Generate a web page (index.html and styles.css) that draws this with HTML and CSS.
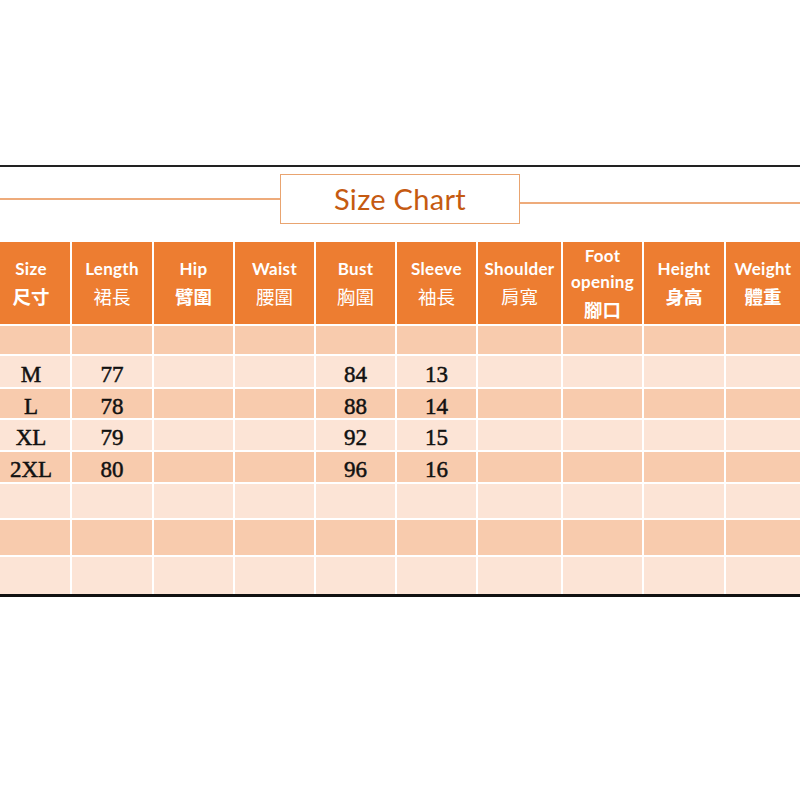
FILE: index.html
```html
<!DOCTYPE html>
<html>
<head>
<meta charset="utf-8">
<link rel="stylesheet" href="styles.css">
</head>
<body>
<div class="page">
  <div class="rule-top"></div>
  <div class="title-row">
    <div class="line line-left"></div>
    <div class="title-box">Size Chart</div>
    <div class="line line-right"></div>
  </div>
  <div class="chart">
    <div class="cell head first"><span class="en">Size</span><span class="zh b">尺寸</span></div>
    <div class="cell head"><span class="en">Length</span><span class="zh">裙長</span></div>
    <div class="cell head"><span class="en">Hip</span><span class="zh b">臂圍</span></div>
    <div class="cell head"><span class="en">Waist</span><span class="zh">腰圍</span></div>
    <div class="cell head"><span class="en">Bust</span><span class="zh">胸圍</span></div>
    <div class="cell head"><span class="en">Sleeve</span><span class="zh">袖長</span></div>
    <div class="cell head"><span class="en">Shoulder</span><span class="zh">肩寬</span></div>
    <div class="cell head"><span class="en">Foot</span><span class="en">opening</span><span class="zh b">腳口</span></div>
    <div class="cell head"><span class="en">Height</span><span class="zh b">身高</span></div>
    <div class="cell head"><span class="en">Weight</span><span class="zh b">體重</span></div>

    <div class="cell dark first"></div><div class="cell dark"></div><div class="cell dark"></div><div class="cell dark"></div><div class="cell dark"></div><div class="cell dark"></div><div class="cell dark"></div><div class="cell dark"></div><div class="cell dark"></div><div class="cell dark"></div>

    <div class="cell light first">M</div><div class="cell light">77</div><div class="cell light"></div><div class="cell light"></div><div class="cell light">84</div><div class="cell light">13</div><div class="cell light"></div><div class="cell light"></div><div class="cell light"></div><div class="cell light"></div>

    <div class="cell dark first">L</div><div class="cell dark">78</div><div class="cell dark"></div><div class="cell dark"></div><div class="cell dark">88</div><div class="cell dark">14</div><div class="cell dark"></div><div class="cell dark"></div><div class="cell dark"></div><div class="cell dark"></div>

    <div class="cell light first">XL</div><div class="cell light">79</div><div class="cell light"></div><div class="cell light"></div><div class="cell light">92</div><div class="cell light">15</div><div class="cell light"></div><div class="cell light"></div><div class="cell light"></div><div class="cell light"></div>

    <div class="cell dark first">2XL</div><div class="cell dark">80</div><div class="cell dark"></div><div class="cell dark"></div><div class="cell dark">96</div><div class="cell dark">16</div><div class="cell dark"></div><div class="cell dark"></div><div class="cell dark"></div><div class="cell dark"></div>

    <div class="cell light first"></div><div class="cell light"></div><div class="cell light"></div><div class="cell light"></div><div class="cell light"></div><div class="cell light"></div><div class="cell light"></div><div class="cell light"></div><div class="cell light"></div><div class="cell light"></div>

    <div class="cell dark first"></div><div class="cell dark"></div><div class="cell dark"></div><div class="cell dark"></div><div class="cell dark"></div><div class="cell dark"></div><div class="cell dark"></div><div class="cell dark"></div><div class="cell dark"></div><div class="cell dark"></div>

    <div class="cell light first"></div><div class="cell light"></div><div class="cell light"></div><div class="cell light"></div><div class="cell light"></div><div class="cell light"></div><div class="cell light"></div><div class="cell light"></div><div class="cell light"></div><div class="cell light"></div>
  </div>
  <div class="rule-bottom"></div>
</div>
</body>
</html>
```

FILE: styles.css
```css
html, body {
  margin: 0;
  padding: 0;
  background: #ffffff;
}

.page {
  width: 800px;
  padding-top: 165px;
}

.rule-top {
  height: 2px;
  background: #222222;
}

.title-row {
  display: flex;
  align-items: flex-start;
  padding-top: 7px;
  height: 50px;
  margin-bottom: 18px;
}

.line {
  flex: 1;
  height: 2px;
  background: #eeab7b;
}

.line-left {
  margin-top: 24px;
}

.line-right {
  margin-top: 28px;
}

.title-box {
  width: 238px;
  height: 48px;
  box-sizing: content-box;
  border: 1px solid #e9a470;
  display: flex;
  align-items: center;
  justify-content: center;
  padding-bottom: 0;
  font-family: "Lato", "Open Sans", sans-serif;
  font-size: 29px;
  line-height: 34px;
  color: #c55a11;
  letter-spacing: 0.3px;
}

.title-text {
  display: block;
}

.chart {
  display: grid;
  grid-template-columns: 70px 80px 79px 79px 79px 79px 83px 79px 80px 74px;
  grid-template-rows: 82px 28px 31px 29px 30px 30px 34px 35px 37px;
  gap: 2px;
  background: #ffffff;
}

.cell {
  display: flex;
  align-items: center;
  justify-content: center;
  font-family: "Liberation Serif", "Times New Roman", serif;
  font-size: 23px;
  color: #111111;
  -webkit-text-stroke: 0.5px #111111;
  padding-top: 6px;
  box-sizing: border-box;
}

.cell.first {
  padding-right: 8px;
}

.head {
  background: #ed7d31;
  flex-direction: column;
  color: #ffffff;
  -webkit-text-stroke: 0;
  padding-top: 0;
}

.en {
  font-family: "Lato", "Open Sans", sans-serif;
  font-weight: 700;
  font-size: 17px;
  letter-spacing: 0.3px;
  line-height: 26px;
}

.zh {
  font-family: "Noto Sans CJK TC", "Noto Sans CJK SC", sans-serif;
  font-size: 18.5px;
  line-height: 28px;
  font-weight: 400;
}

.zh.b {
  font-weight: 700;
}

.dark {
  background: #f8cbad;
}

.light {
  background: #fce4d6;
}

.rule-bottom {
  height: 3px;
  background: #111111;
}
```
